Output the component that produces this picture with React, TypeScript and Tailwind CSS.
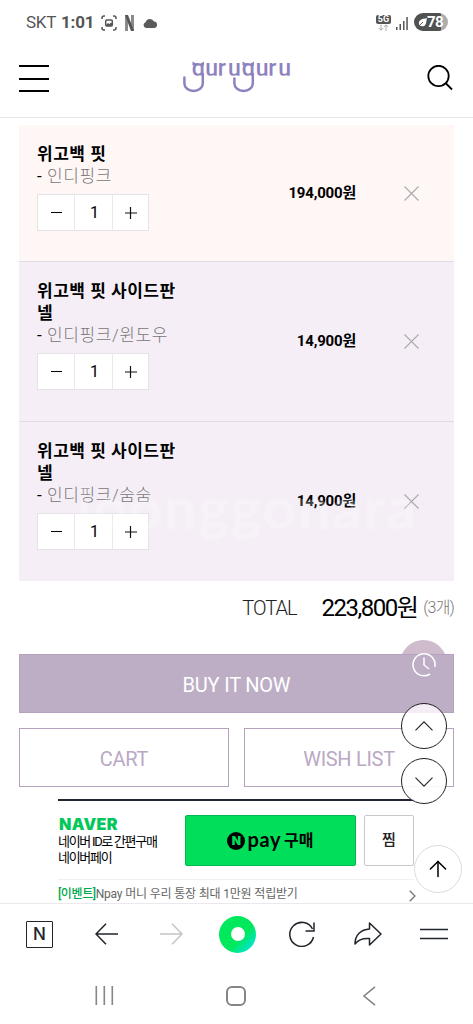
import { useState } from "react";
import { ArrowUp } from "lucide-react";

type CartItem = {
  id: number;
  name: string;
  option: string;
  price: number;
  rowClass: string;
};

const ITEMS: CartItem[] = [
  { id: 1, name: "위고백 핏", option: "인디핑크", price: 194000, rowClass: "h-[137px] bg-[#fff6f6] border-b border-[#dedce0]" },
  { id: 2, name: "위고백 핏 사이드판넬", option: "인디핑크/윈도우", price: 14900, rowClass: "h-[160px] bg-[#f5eef6] border-b border-[#e0dbe3]" },
  { id: 3, name: "위고백 핏 사이드판넬", option: "인디핑크/숨숨", price: 14900, rowClass: "h-[159px] bg-[#f5eef6]" },
];

function StatusBar() {
  return (
    <div className="h-[45px] shrink-0 flex items-center pl-[26px] pr-[25px] text-[#555]">
      <span className="text-[17px] tracking-[-0.3px]">SKT</span>
      <span className="ml-[5px] w-[33px] whitespace-nowrap text-[17px] font-bold tracking-[-0.2px]">1:01</span>
      <svg className="ml-[7px]" width="16" height="16" viewBox="0 0 16 16" fill="none" stroke="#555" strokeWidth="1.5">
        <path d="M1 4V3a2 2 0 0 1 2-2h1M12 1h1a2 2 0 0 1 2 2v1M15 12v1a2 2 0 0 1-2 2h-1M4 15H3a2 2 0 0 1-2-2v-1" />
        <rect x="4.7" y="5" width="6.6" height="6" rx="1" />
        <path d="M5 10l2-2 1.4 1L10 7.500l1 1V11H5z" fill="#555" stroke="none" />
      </svg>
      <svg className="ml-[8px]" width="9" height="16" viewBox="0 0 9 16">
        <path d="M0 0h3v16H0zM6 0h3v16H6z" fill="#8b8b8b" />
        <path d="M0 0h3l6 16H6z" fill="#555" />
      </svg>
      <svg className="ml-[9px] mt-px" width="15" height="10" viewBox="0 0 15 10" fill="#5b5b5b">
        <path d="M3 10a3 3 0 0 1-.4-5.800A4.500 4.500 0 0 1 11 3.500 3.300 3.300 0 0 1 11.500 10z" />
      </svg>
      <div className="ml-auto w-[15px] flex flex-col items-center">
        <span className="w-[15px] h-[9px] rounded-[2px] bg-[#555] text-white text-[9px] leading-[9px] font-bold text-center">5G</span>
        <svg width="11" height="7" viewBox="0 0 11 7" fill="none" stroke="#aaa" strokeWidth="1">
          <path d="M3 .5v5.500M.8 4L3 6.300 5.200 4M8 7V1M5.800 3L8 .8l2.200 2.200" />
        </svg>
      </div>
      <svg className="ml-[5px] mt-px" width="12" height="13" viewBox="0 0 12 13" fill="#555">
        <rect x="0" y="10" width="1.500" height="3" />
        <rect x="3.500" y="7" width="1.500" height="6" />
        <rect x="7" y="4" width="1.500" height="9" />
        <rect x="10.300" y="0" width="1.500" height="13" />
      </svg>
      <div className="ml-[6px] w-[34px] h-[18px] -mt-px rounded-full bg-linear-to-r from-[#505250] from-78% to-[#adadad] to-78% flex items-center pl-[4px] text-white">
        <svg width="9" height="9" viewBox="0 0 9 9" fill="none">
          <path d="M9 0C8 1 5 0 2.500 2S1 6 1.500 7.500C4 9 7 8.500 8 5.500 8.600 3.500 8.500 1.500 9 0z" fill="#fff" />
          <path d="M0 9l5-5" stroke="#505250" strokeWidth=".9" />
        </svg>
        <span className="text-[15px] leading-none font-bold tracking-[-0.5px]">78</span>
      </div>
    </div>
  );
}

function Logo() {
  return (
    <svg className="overflow-visible" width="108" height="34" viewBox="183 60 108 34" aria-label="guruguru">
      <text
        x="191.800 205.300 217.800 228 241.800 255.700 268.200 278.200"
        y="75.500"
        className="font-[Roboto] text-[23px] font-medium"
        fill="#8e82be"
      >
        guruguru
      </text>
      <rect x="183" y="75.700" width="108" height="19" fill="#fff" />
      {/* 고양이 귀와 꼬리 */}
      <g fill="none" stroke="#8e82be" strokeWidth="2.500" strokeLinecap="round">
        <path d="M202.800 74v9.500a9.200 7.500 0 0 1-18.400 0v-6" />
        <path d="M252.800 74v9.500a9.200 7.500 0 0 1-18.400 0v-5" />
      </g>
      <g fill="#8e82be">
        <path d="M192.500 61.500l4 2.200h4l3.500-2.200v4h-11.500z" />
        <path d="M242.500 61.500l4 2.200h4l3.500-2.200v4h-11.500z" />
      </g>
    </svg>
  );
}

function Header() {
  return (
    <header className="h-[73px] shrink-0 flex items-center border-b border-[#e5e5e5] pl-[19px] pr-[20px] pb-[9px]">
      <button className="mt-1 w-[30px] h-[27px] flex flex-col justify-between">
        <span className="h-[2px] w-full bg-black" />
        <span className="h-[2px] w-full bg-black" />
        <span className="h-[2px] w-full bg-black" />
      </button>
      <div className="ml-[134px]">
        <Logo />
      </div>
      <button className="ml-auto mt-[2px]">
        <svg width="26" height="26" viewBox="0 0 26 26" fill="none" stroke="#000" strokeWidth="1.800">
          <circle cx="11.500" cy="11" r="10.200" />
          <path d="M18.500 18l6.500 6.500" />
        </svg>
      </button>
    </header>
  );
}

function Stepper({ value, onChange }: { value: number; onChange: (n: number) => void }) {
  return (
    <div className="mt-[6px] flex w-[112px] h-[37px] border border-[#e5e3e6] bg-white text-black">
      <button className="w-[36px] flex items-center justify-center" onClick={() => onChange(Math.max(1, value - 1))}>
        <span className="w-[11px] h-[1.500px] bg-black" />
      </button>
      <span className="w-[39px] border-x border-[#ebe9ec] pl-[2px] text-center text-[16px] leading-[35px]">{value}</span>
      <button className="flex-1 flex items-center justify-center" onClick={() => onChange(value + 1)}>
        <svg width="12" height="12" viewBox="0 0 12 12" stroke="#111" strokeWidth="1.200">
          <path d="M0 6h12M5.500 0v12" />
        </svg>
      </button>
    </div>
  );
}

function CartRow({ item }: { item: CartItem }) {
  const [count, setCount] = useState(1);

  return (
    <li className={`flex items-center ${item.rowClass}`}>
      <div className="self-start pl-[18px] pt-[18px] w-[182px]">
        <p className="w-[145px] text-[17px] leading-[22px] font-bold tracking-[0.500px] break-all text-black">{item.name}</p>
        <p className="text-[17px] leading-[23px] text-black whitespace-nowrap">
          - <span className="ml-px font-light text-[#777] tracking-[0.600px]">{item.option}</span>
        </p>
        <Stepper value={count} onChange={setCount} />
      </div>
      <span className="flex-1 pr-[48px] text-right text-[15px] font-bold tracking-[-0.200px] text-black">
        {item.price.toLocaleString()}원
      </span>
      <button className="mr-[35px]">
        <svg width="15" height="15" viewBox="0 0 15 15" stroke="#aaa" strokeWidth="1.100">
          <path d="M.5.500l14 14M14.500.500l-14 14" />
        </svg>
      </button>
    </li>
  );
}

function NaverPay() {
  return (
    <section className="mt-[12px] ml-[58px] w-[356px] border-t-2 border-[#202532]">
      <div className="flex pt-[14px] h-[79px] border-b border-[#f0f0f0]">
        <div className="w-[127px] text-black">
          <p className="pl-px font-[Inter] text-[16px] leading-[19px] font-black tracking-[0.400px] text-[#03c75a]">NAVER</p>
          <p className="text-[13px] leading-[16px] tracking-[-1.300px] whitespace-nowrap">
            네이버 ID로 간편구매
            <br />
            네이버페이
          </p>
        </div>
        <button className="w-[171px] h-[51px] rounded-[2px] border border-[#00b84e] bg-[#00de5a] flex items-center justify-center text-black">
          <span className="size-[18px] rounded-full bg-black text-[#00de5a] font-[Inter] text-[12px] font-black leading-[18px]">N</span>
          <span className="ml-[2px] mb-[4px] font-[Lato] text-[20px] leading-none font-bold tracking-[0.600px]">pay</span>
          <span className="ml-[3px] text-[16px] font-bold">구매</span>
        </button>
        <button className="ml-[8px] w-[50px] h-[51px] rounded-[2px] border border-[#c8c8c8] text-[15px] font-medium text-[#222]">찜</button>
      </div>
      <div className="flex items-center justify-between h-[28px]">
        <p className="text-[12px] tracking-[-0.180px] text-[#666] whitespace-nowrap">
          <span className="text-[#00a84b] font-medium tracking-[-0.400px]">[이벤트]</span>Npay 머니 우리 통장 최대 1만원 적립받기
        </p>
        <svg className="-mr-[2px] mt-[3px]" width="7" height="12" viewBox="0 0 7 12" fill="none" stroke="#777" strokeWidth="1.300">
          <path d="M.7.700L6 6 .7 11.300" />
        </svg>
      </div>
    </section>
  );
}

function BrowserBar() {
  return (
    <nav className="h-[64px] shrink-0 border-t border-[#ece8f0] bg-white flex items-center pb-[3px] pl-[26px] text-[#20252b]">
      <span className="w-[27px] h-[27px] rounded-[1px] border-[1.500px] border-[#20252b] flex items-center justify-center font-[Inter] text-[17px] font-medium leading-none">
        N
      </span>
      <svg className="ml-[42px]" width="23" height="22" viewBox="0 0 23 22" fill="none" stroke="currentColor" strokeWidth="1.500">
        <path d="M11 .7L1 11l10 10.300M1 11h22" />
      </svg>
      <svg className="ml-[42px]" width="23" height="22" viewBox="0 0 23 22" fill="none" stroke="#c4c4c4" strokeWidth="1.500">
        <path d="M12 .7L22 11 12 21.300M22 11H0" />
      </svg>
      <span className="ml-[36px] size-[37px] rounded-full bg-linear-135 from-[#00e85c] from-60% to-[#00dff5] flex items-center justify-center">
        <span className="size-[14px] rounded-full bg-white" />
      </span>
      <svg className="ml-[33px]" width="26" height="26" viewBox="0 0 26 26" fill="none" stroke="currentColor" strokeWidth="1.500">
        <path d="M24.500 16A12 12 0 1 1 23.500 8M25 1.500V10h-8.500" />
      </svg>
      <svg className="ml-[39px]" width="28" height="24" viewBox="0 0 28 24" fill="none" stroke="currentColor" strokeWidth="1.500" strokeLinejoin="round">
        <path d="M15.500 1L27 12 15.500 23v-6.500C8.500 16 4 18 1 22 1 13 7 7.500 15.500 7z" />
      </svg>
      <svg className="ml-[38px]" width="28" height="12" viewBox="0 0 28 12" stroke="currentColor" strokeWidth="1.700">
        <path d="M0 1.500h28M0 10.500h28" />
      </svg>
    </nav>
  );
}

function SystemNav() {
  return (
    <nav className="h-[57px] shrink-0 flex items-center justify-between pl-[95px] pr-[97px] text-[#868686]">
      <svg width="19" height="19" viewBox="0 0 19 19" stroke="currentColor" strokeWidth="1.600">
        <path d="M1.300 0v19M9.300 0v19M17.300 0v19" />
      </svg>
      <span className="-ml-[5px] w-[20px] h-[20px] rounded-[6px] border-2 border-[#868686]" />
      <svg width="13" height="20" viewBox="0 0 13 20" fill="none" stroke="currentColor" strokeWidth="1.600">
        <path d="M12 .800L1 10l11 9.200" />
      </svg>
    </nav>
  );
}

export default function App() {
  const total = ITEMS.reduce((sum, item) => sum + item.price, 0);

  return (
    <div className="relative w-[473px] h-[1024px] overflow-hidden bg-white flex flex-col font-['Roboto','Noto_Sans_CJK_KR',sans-serif]">
      <StatusBar />
      <Header />

      <main className="h-[785px] shrink-0 overflow-hidden pt-[7px]">
        <div className="relative mx-[19px]">
          <ul>
            {ITEMS.map((item) => (
              <CartRow key={item.id} item={item} />
            ))}
          </ul>
          {/* 워터마크 */}
          <span className="pointer-events-none absolute left-[58px] top-[350px] font-['Lato'] text-[58px] leading-[64px] font-bold tracking-[1.800px] text-white/25">
            joonggonara
          </span>
        </div>

        <div className="mx-[19px] h-[73px] pb-[20px] flex items-center justify-end">
          <span className="text-[20px] font-light tracking-[-1px] text-[#222]">TOTAL</span>
          <span className="ml-[25px] text-[24px] tracking-[-1.500px] text-black">{total.toLocaleString()}원</span>
          <span className="ml-[6px] text-[16px] font-light tracking-[-0.8px] text-[#777]">({ITEMS.length}개)</span>
        </div>

        <div className="relative mx-[19px]">
          <span className="absolute right-[7px] -top-[14px] size-[47px] rounded-full bg-[#cebccd]" />
          <button className="relative w-full h-[59px] border border-[#b4a2bf] bg-[#bdaec5] pt-[2px] text-[20px] tracking-[-0.200px] text-white">BUY IT NOW</button>
        </div>
        <div className="mx-[19px] mt-[15px] grid grid-cols-2 gap-[15px] text-[20px] tracking-[-0.300px] text-[#baa8c4]">
          <button className="h-[59px] border border-[#b4a2bf] pt-[2px]">CART</button>
          <button className="h-[59px] border border-[#b4a2bf] pt-[2px]">WISH LIST</button>
        </div>

        <NaverPay />
      </main>

      {/* 플로팅 버튼 */}
      <svg className="absolute left-[412px] top-[653px]" width="24" height="24" viewBox="0 0 24 24" fill="none" stroke="#fff" strokeWidth="1.500">
        <path d="M22.800 14A11 11 0 1 0 18 21M12 4.500V12l5 4" />
      </svg>
      <button className="absolute left-[401px] top-[703px] size-[46px] rounded-full border border-[#222] bg-[linear-gradient(#f5ecf6_9px,#fff_9px)] flex items-center justify-center">
        <svg width="18" height="10" viewBox="0 0 18 10" fill="none" stroke="#222" strokeWidth="1.100">
          <path d="M.5 9.300L9 .8l8.500 8.500" />
        </svg>
      </button>
      <button className="absolute left-[401px] top-[758px] size-[46px] rounded-full border border-[#222] bg-white/90 flex items-center justify-center">
        <svg className="mt-[2px]" width="18" height="10" viewBox="0 0 18 10" fill="none" stroke="#222" strokeWidth="1.100">
          <path d="M.5.700L9 9.200 17.500.700" />
        </svg>
      </button>
      <button className="absolute left-[414px] top-[845px] size-[48px] rounded-full border border-[#dddbe0] bg-white flex items-center justify-center">
        <ArrowUp className="size-[26px]" strokeWidth={1.4} />
      </button>

      <BrowserBar />
      <SystemNav />
    </div>
  );
}
